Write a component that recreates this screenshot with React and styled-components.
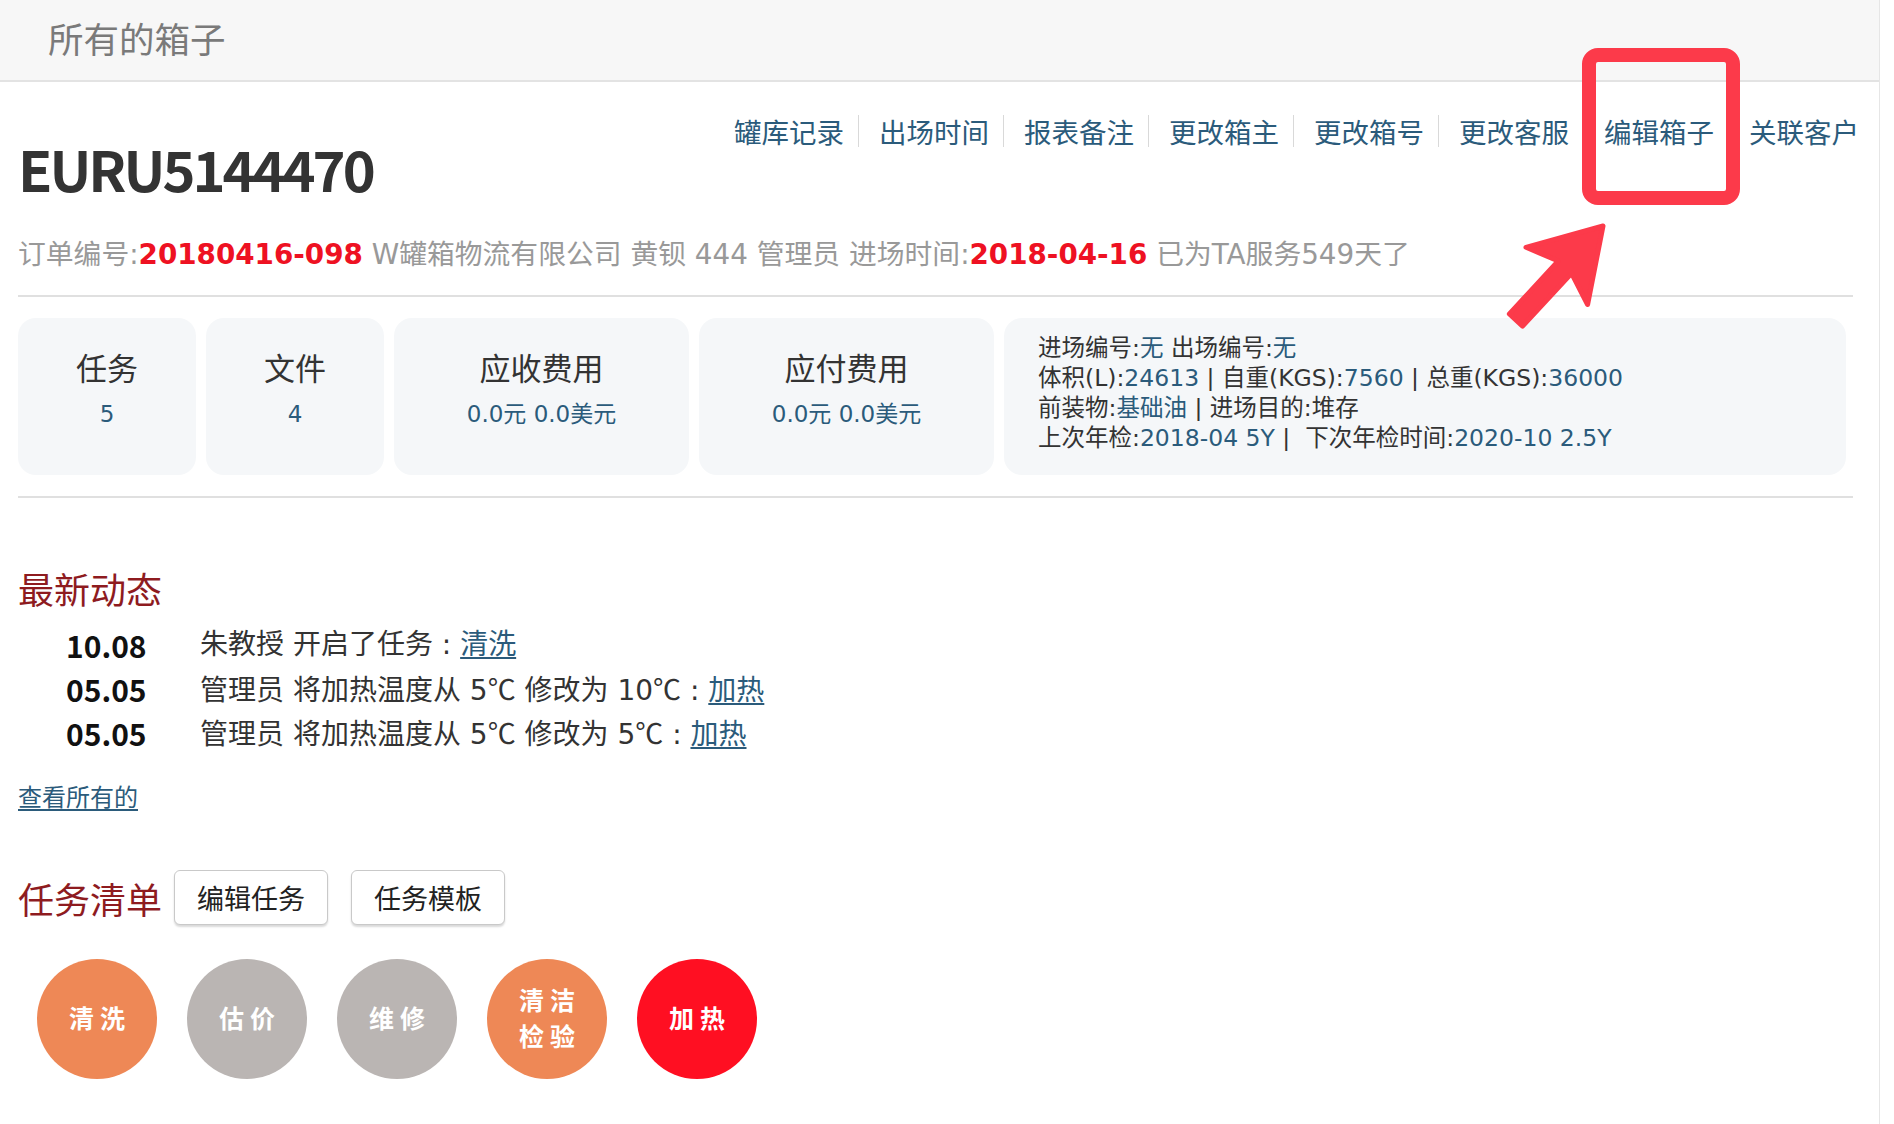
import React from 'react';
import styled, { createGlobalStyle } from 'styled-components';

const GlobalStyle = createGlobalStyle`
  html, body { margin: 0; padding: 0; background: #fff; }
  body { font-family: "Noto Sans CJK SC", "Noto Sans", sans-serif; }
  * { box-sizing: border-box; }
`;

const TEAL = '#2b5b7b';
const LATIN = '"DejaVu Sans", "Noto Sans CJK SC", sans-serif';

const Page = styled.div`
  position: relative;
  width: 1880px;
  min-height: 1124px;
  border-right: 1px solid #e6e6e6;
`;

const TopBar = styled.header`
  height: 82px;
  background: #f7f7f7;
  border-bottom: 2px solid #e3e3e3;
  display: flex;
  align-items: center;
  padding: 0 0 5px 48px;
  font-size: 35.5px;
  color: #7a7a7a;
`;

const Main = styled.main`
  padding: 0 26px 0 18px;
`;

const Nav = styled.nav`
  display: flex;
  justify-content: flex-end;
  margin-top: 33px;
  margin-right: -6px;
`;

const NavItem = styled.a`
  font-size: 27.5px;
  line-height: 32px;
  color: ${TEAL};
  padding: 0 14px 0 20px;
  border-right: 1px solid #d9d9d9;
  text-decoration: none;
  &:last-child { border-right: none; padding-right: 0; }
`;

const Title = styled.h1`
  margin: -8px 0 0;
  font-size: 56px;
  line-height: 58px;
  letter-spacing: -3px;
  font-weight: 700;
  color: #333;
`;

const InfoLine = styled.div`
  margin-top: 44px;
  font-family: ${LATIN};
  font-size: 27.8px;
  line-height: 28px;
  color: #999;
`;

const Red = styled.span`
  color: #ee1122;
  font-weight: 700;
`;

const Divider = styled.div`
  height: 2px;
  background: #e0e0e0;
  margin-top: ${p => p.$mt}px;
`;

const Cards = styled.div`
  display: flex;
  gap: 10px;
  margin-top: 21px;
  height: 157px;
  width: 1828px;
`;

const Card = styled.div`
  width: ${p => p.$w}px;
  flex: none;
  background: #f5f7f9;
  border-radius: 18px;
  display: flex;
  flex-direction: column;
  align-items: center;
  padding-top: 33px;
`;

const CardTitle = styled.div`
  font-size: 31px;
  line-height: 31px;
  color: #333;
`;

const CardValue = styled.div`
  margin-top: 20px;
  font-family: ${LATIN};
  font-size: 23px;
  line-height: 24px;
  color: ${TEAL};
`;

const DetailCard = styled.div`
  flex: 1;
  background: #f5f7f9;
  border-radius: 18px;
  display: flex;
  flex-direction: column;
  justify-content: center;
  padding: 0 0 8px 34px;
  font-family: ${LATIN};
  font-size: 23.5px;
  line-height: 30px;
  color: #333;
`;

const V = styled.span`
  color: ${TEAL};
`;

const SectionTitle = styled.h2`
  margin: ${p => p.$mt || 0}px 0 0;
  font-size: 36px;
  line-height: 36px;
  font-weight: 400;
  color: #8e1b1f;
`;

const Activity = styled.div`
  margin-top: 17px;
`;

const Row = styled.div`
  display: grid;
  grid-template-columns: 134px 1fr;
  align-items: center;
  height: 44px;
  padding-left: 48px;
  line-height: 30px;
  font-family: ${LATIN};
  font-size: 28px;
  color: #333;
`;

const DateCell = styled.span`
  font-family: "Noto Sans CJK SC", sans-serif;
  font-weight: 700;
  font-size: 30px;
  color: #111;
`;

const Deg = styled.span`
  display: inline-block;
  width: 1em;
  text-align: center;
  font-family: "Noto Sans CJK SC", sans-serif;
`;

const Link = styled.a`
  color: ${TEAL};
  text-decoration: underline;
  text-underline-offset: 3px;
`;

const ViewAll = styled(Link)`
  display: inline-block;
  margin-top: 29px;
  font-size: 24px;
  line-height: 24px;
`;

const TaskHeader = styled.div`
  display: flex;
  align-items: center;
  gap: 12px;
  margin-top: 59px;
`;

const ButtonGroup = styled.div`
  display: flex;
  gap: 23px;
`;

const Button = styled.button`
  width: 154px;
  height: 55px;
  background: #fff;
  border: 1px solid #c9c9c9;
  border-radius: 6px;
  box-shadow: 0 2px 2px rgba(0, 0, 0, 0.15);
  font-family: inherit;
  font-size: 27px;
  color: #222;
  padding: 0;
`;

const Circles = styled.div`
  display: flex;
  gap: 30px;
  margin-top: 34px;
  padding-left: 19px;
`;

const Circle = styled.div`
  width: 120px;
  height: 120px;
  border-radius: 50%;
  background: ${p => p.$bg};
  color: #fff;
  display: flex;
  flex-direction: column;
  align-items: center;
  justify-content: center;
  font-size: 25px;
  line-height: 36px;
  font-weight: 700;
  letter-spacing: 6px;
  padding: 0 0 4px 6px;
`;

const Highlight = styled.div`
  position: absolute;
  left: 1582px;
  top: 48px;
  width: 158px;
  height: 157px;
  border: 14px solid #fc3a4a;
  border-radius: 16px;
  pointer-events: none;
`;

const Arrow = styled.svg`
  position: absolute;
  left: 1500px;
  top: 215px;
  pointer-events: none;
`;

const navItems = ['罐库记录', '出场时间', '报表备注', '更改箱主', '更改箱号', '更改客服', '编辑箱子', '关联客户'];

const ORANGE = '#ee8856';
const GRAY = '#bab5b3';
const REDC = '#ff0f22';

export default function App() {
  return (
    <Page>
      <GlobalStyle />
      <TopBar>所有的箱子</TopBar>
      <Main>
        <Nav>
          {navItems.map(n => <NavItem key={n}>{n}</NavItem>)}
        </Nav>
        <Title>EURU5144470</Title>
        <InfoLine>
          订单编号:<Red>20180416-098</Red> W罐箱物流有限公司 黄钡 444 管理员 进场时间:<Red>2018-04-16</Red> 已为TA服务549天了
        </InfoLine>
        <Divider $mt={26} />
        <Cards>
          <Card $w={178}><CardTitle>任务</CardTitle><CardValue>5</CardValue></Card>
          <Card $w={178}><CardTitle>文件</CardTitle><CardValue>4</CardValue></Card>
          <Card $w={295}><CardTitle>应收费用</CardTitle><CardValue>0.0元 0.0美元</CardValue></Card>
          <Card $w={295}><CardTitle>应付费用</CardTitle><CardValue>0.0元 0.0美元</CardValue></Card>
          <DetailCard>
            <div>进场编号:<V>无</V> 出场编号:<V>无</V></div>
            <div>体积(L):<V>24613</V> | 自重(KGS):<V>7560</V> | 总重(KGS):<V>36000</V></div>
            <div>前装物:<V>基础油</V> | 进场目的:堆存</div>
            <div>上次年检:<V>2018-04 5Y</V> |&nbsp; 下次年检时间:<V>2020-10 2.5Y</V></div>
          </DetailCard>
        </Cards>
        <Divider $mt={21} />
        <SectionTitle $mt={72}>最新动态</SectionTitle>
        <Activity>
          <Row><DateCell>10.08</DateCell><span>朱教授 开启了任务 : <Link>清洗</Link></span></Row>
          <Row><DateCell>05.05</DateCell><span>管理员 将加热温度从 5<Deg>℃</Deg> 修改为 10<Deg>℃</Deg> : <Link>加热</Link></span></Row>
          <Row><DateCell>05.05</DateCell><span>管理员 将加热温度从 5<Deg>℃</Deg> 修改为 5<Deg>℃</Deg> : <Link>加热</Link></span></Row>
        </Activity>
        <ViewAll>查看所有的</ViewAll>
        <TaskHeader>
          <SectionTitle>任务清单</SectionTitle>
          <ButtonGroup>
            <Button>编辑任务</Button>
            <Button>任务模板</Button>
          </ButtonGroup>
        </TaskHeader>
        <Circles>
          <Circle $bg={ORANGE}>清洗</Circle>
          <Circle $bg={GRAY}>估价</Circle>
          <Circle $bg={GRAY}>维修</Circle>
          <Circle $bg={ORANGE}><span>清洁</span><span>检验</span></Circle>
          <Circle $bg={REDC}>加热</Circle>
        </Circles>
      </Main>
      <Highlight />
      <Arrow width="115" height="120" viewBox="0 0 115 120">
        <polygon
          points="103,11 87.6,89.5 71.5,58.2 22.6,111.1 9.4,98.9 58.3,46 26,32.3"
          fill="#fc3a4a"
          stroke="#fc3a4a"
          strokeWidth="5"
          strokeLinejoin="round"
        />
      </Arrow>
    </Page>
  );
}
